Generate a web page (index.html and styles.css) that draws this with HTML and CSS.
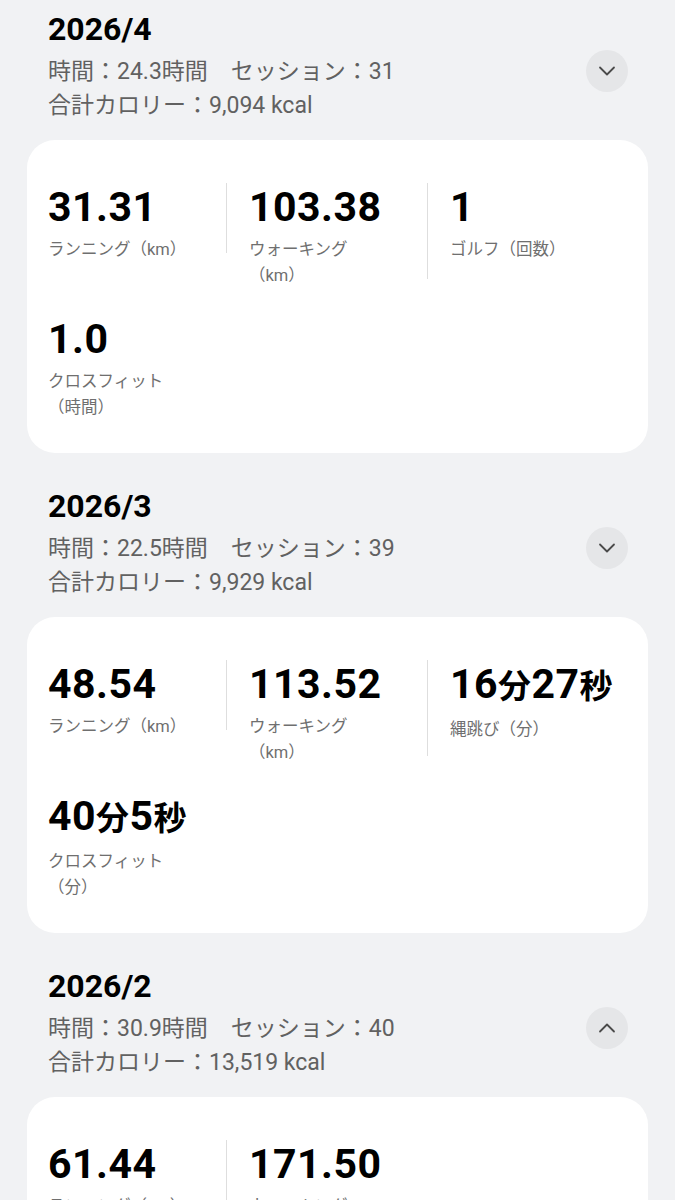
FILE: index.html
```html
<!DOCTYPE html>
<html lang="ja">
<head>
    <meta charset="UTF-8">
    <meta name="viewport" content="width=device-width, initial-scale=1.0">
    <title>月別アクティビティ</title>
    <link rel="stylesheet" href="styles.css">
</head>
<body>
    <div class="page">
        <!-- 2026/4 -->
        <section class="month">
            <div class="head">
                <div class="info">
                    <div class="title">2026/4</div>
                    <div class="meta">時間：24.3時間　セッション：31</div>
                    <div class="meta">合計カロリー：9,094 kcal</div>
                </div>
                <button class="toggle" type="button">
                    <svg width="18" height="10" viewBox="0 0 18 10"><path d="M2 1.5 L9 8.5 L16 1.5" fill="none" stroke="#4a4a4a" stroke-width="1.8" stroke-linecap="round" stroke-linejoin="round"/></svg>
                </button>
            </div>
            <div class="card">
                <div class="row">
                    <div class="cell">
                        <div class="num">31.31</div>
                        <div class="label">ランニング（km）</div>
                    </div>
                    <div class="cell">
                        <div class="num">103.38</div>
                        <div class="label">ウォーキング（km）</div>
                    </div>
                    <div class="cell">
                        <div class="num">1</div>
                        <div class="label">ゴルフ（回数）</div>
                    </div>
                </div>
                <div class="row">
                    <div class="cell">
                        <div class="num">1.0</div>
                        <div class="label">クロスフィット（時間）</div>
                    </div>
                </div>
            </div>
        </section>

        <!-- 2026/3 -->
        <section class="month">
            <div class="head">
                <div class="info">
                    <div class="title">2026/3</div>
                    <div class="meta">時間：22.5時間　セッション：39</div>
                    <div class="meta">合計カロリー：9,929 kcal</div>
                </div>
                <button class="toggle" type="button">
                    <svg width="18" height="10" viewBox="0 0 18 10"><path d="M2 1.5 L9 8.5 L16 1.5" fill="none" stroke="#4a4a4a" stroke-width="1.8" stroke-linecap="round" stroke-linejoin="round"/></svg>
                </button>
            </div>
            <div class="card">
                <div class="row">
                    <div class="cell">
                        <div class="num">48.54</div>
                        <div class="label">ランニング（km）</div>
                    </div>
                    <div class="cell">
                        <div class="num">113.52</div>
                        <div class="label">ウォーキング（km）</div>
                    </div>
                    <div class="cell">
                        <div class="num">16<span class="unit">分</span>27<span class="unit">秒</span></div>
                        <div class="label">縄跳び（分）</div>
                    </div>
                </div>
                <div class="row">
                    <div class="cell">
                        <div class="num">40<span class="unit">分</span>5<span class="unit">秒</span></div>
                        <div class="label">クロスフィット（分）</div>
                    </div>
                </div>
            </div>
        </section>

        <!-- 2026/2 -->
        <section class="month">
            <div class="head">
                <div class="info">
                    <div class="title">2026/2</div>
                    <div class="meta">時間：30.9時間　セッション：40</div>
                    <div class="meta">合計カロリー：13,519 kcal</div>
                </div>
                <button class="toggle" type="button">
                    <svg width="18" height="10" viewBox="0 0 18 10"><path d="M2 8.5 L9 1.5 L16 8.5" fill="none" stroke="#4a4a4a" stroke-width="1.8" stroke-linecap="round" stroke-linejoin="round"/></svg>
                </button>
            </div>
            <div class="card">
                <div class="row">
                    <div class="cell">
                        <div class="num">61.44</div>
                        <div class="label">ランニング（km）</div>
                    </div>
                    <div class="cell">
                        <div class="num">171.50</div>
                        <div class="label">ウォーキング（km）</div>
                    </div>
                </div>
            </div>
        </section>
    </div>
</body>
</html>
```

FILE: styles.css
```css
body {
    margin: 0;
    background-color: #f1f2f4;
    font-family: Roboto, "Noto Sans CJK JP", sans-serif;
    color: #000;
}
.page {
    padding: 11px 27px 40px;
}
.month + .month {
    margin-top: 35px;
}
.head {
    display: flex;
    align-items: center;
    padding: 0 20px 0 21px;
}
.info {
    flex: 1;
}
.title {
    font-size: 32px;
    font-weight: bold;
    line-height: 36px;
    margin-bottom: 8px;
}
.meta {
    font-size: 23px;
    line-height: 34px;
    color: #616161;
}
.toggle {
    width: 42px;
    height: 42px;
    border: none;
    border-radius: 50%;
    background-color: #e5e6e8;
    display: flex;
    align-items: center;
    justify-content: center;
    padding: 0;
    margin-top: 8px;
}
.card {
    margin-top: 17px;
    background: #ffffff;
    border-radius: 28px;
    padding: 43px 21px 42px;
    display: flex;
    flex-direction: column;
    gap: 36px;
}
.row {
    display: flex;
    align-items: flex-start;
}
.cell {
    flex: 0 0 178px;
    margin-right: 22px;
}
.cell:not(:last-child) {
    border-right: 1px solid #dedede;
}
.num {
    font-size: 41px;
    font-weight: bold;
    line-height: 48px;
    letter-spacing: 0.5px;
}
.num .unit {
    font-size: 33px;
}
.label {
    margin-top: 6px;
    margin-bottom: -10px;
    max-width: 140px;
    font-size: 16.5px;
    line-height: 26px;
    color: #6f6f6f;
}
```
